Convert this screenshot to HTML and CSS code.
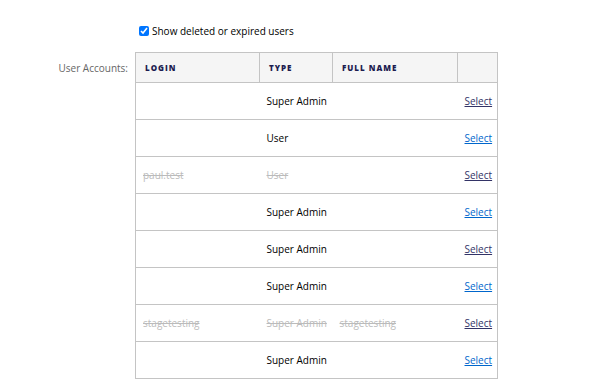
FILE: index.html
```html
<!DOCTYPE html>
<html lang="en">
<head>
    <meta charset="UTF-8">
    <title>User Accounts</title>
    <link rel="stylesheet" href="styles.css">
</head>
<body>
    <form class="accounts-form">
        <div class="field-row">
            <div class="field-label"></div>
            <label class="show-deleted">
                <input type="checkbox" checked>
                Show deleted or expired users
            </label>
        </div>

        <div class="field-row">
            <div class="field-label">User Accounts:</div>
            <table class="accounts">
                <colgroup>
                    <col class="col-login">
                    <col class="col-type">
                    <col class="col-name">
                    <col class="col-action">
                </colgroup>
                <thead>
                    <tr>
                        <th>Login</th>
                        <th>Type</th>
                        <th>Full Name</th>
                        <th></th>
                    </tr>
                </thead>
                <tbody>
                    <tr>
                        <td></td><td>Super Admin</td><td></td>
                        <td class="action"><a href="#" class="seen">Select</a></td>
                    </tr>
                    <tr>
                        <td></td><td>User</td><td></td>
                        <td class="action"><a href="#">Select</a></td>
                    </tr>
                    <tr class="deleted">
                        <td>paul.test</td><td>User</td><td></td>
                        <td class="action"><a href="#" class="seen">Select</a></td>
                    </tr>
                    <tr>
                        <td></td><td>Super Admin</td><td></td>
                        <td class="action"><a href="#">Select</a></td>
                    </tr>
                    <tr>
                        <td></td><td>Super Admin</td><td></td>
                        <td class="action"><a href="#" class="seen">Select</a></td>
                    </tr>
                    <tr>
                        <td></td><td>Super Admin</td><td></td>
                        <td class="action"><a href="#">Select</a></td>
                    </tr>
                    <tr class="deleted">
                        <td>stagetesting</td><td>Super Admin</td><td>stagetesting</td>
                        <td class="action"><a href="#" class="seen">Select</a></td>
                    </tr>
                    <tr>
                        <td></td><td>Super Admin</td><td></td>
                        <td class="action"><a href="#">Select</a></td>
                    </tr>
                </tbody>
            </table>
        </div>
    </form>
</body>
</html>
```

FILE: styles.css
```css
body {
    margin: 0;
    font-family: "Open Sans", Arial, sans-serif;
    font-size: 10px;
    color: #000;
    background-color: #fff;
}

.accounts-form {
    padding-top: 24px;
}

.field-row {
    display: flex;
    align-items: flex-start;
}

.field-row + .field-row {
    margin-top: 14px;
}

.field-label {
    width: 128px;
    flex: none;
    padding-right: 7px;
    text-align: right;
    color: #666;
    line-height: 30px;
    padding-top: 1px;
}

.show-deleted {
    display: flex;
    align-items: center;
}

.show-deleted input {
    width: 10px;
    height: 10px;
    margin: 0 3px 0 4px;
}

.accounts {
    border-collapse: collapse;
    width: 362px;
    table-layout: fixed;
}

.col-login { width: 124px; }
.col-type { width: 73px; }
.col-name { width: 125px; }
.col-action { width: 40px; }

.accounts th {
    height: 29px;
    padding: 0 9px;
    background-color: #f5f5f5;
    border: 1px solid #c4c4c4;
    text-align: left;
    text-transform: uppercase;
    font-size: 8px;
    font-weight: 800;
    letter-spacing: 1px;
    color: #1c1c50;
}

.accounts td {
    height: 36px;
    padding: 0 7px;
    border-top: 1px solid #c4c4c4;
    border-bottom: 1px solid #c4c4c4;
    white-space: nowrap;
}

.accounts td:first-child { border-left: 1px solid #c4c4c4; }
.accounts td:last-child { border-right: 1px solid #c4c4c4; }

.accounts td.action {
    text-align: right;
    overflow: visible;
}

.accounts td.action a {
    color: #0066cc;
}

.accounts td.action a.seen {
    color: #333366;
}

.deleted td:not(.action) {
    color: #bbb;
    text-decoration: line-through;
}
```
